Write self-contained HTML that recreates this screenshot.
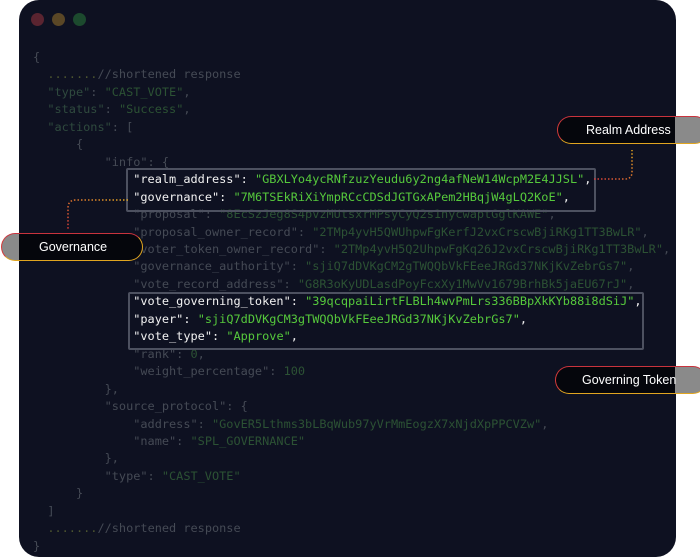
<!DOCTYPE html>
<html><head><style>
html,body{margin:0;padding:0;background:#fff;width:700px;height:557px;overflow:hidden;position:relative}
.win{position:absolute;left:19px;top:0;width:657px;height:557px;background:#0e1121;border-radius:20px}
.dot{position:absolute;top:13px;width:13px;height:13px;border-radius:50%}
pre{position:absolute;left:33px;top:49px;margin:0;font-family:"DejaVu Sans Mono","Liberation Mono",monospace;font-size:11.9px;line-height:17.45px;color:#454a55}
.k{color:#3f4a4c}.v{color:#2c5234}.d{color:#4c5530}
.b{color:#f2f2f2}.g{color:#56c93c}
.kt{color:#2f4a3e}
.box{position:absolute;border:2px solid #4d5160;border-radius:2px}
.pill{position:absolute;height:26px;border-radius:14px;border:1.5px solid #e0a520;border-left-color:#d33a3a;border-top-color:#c9333d;background:#05060c;color:#fff;font-family:"Liberation Sans",sans-serif;font-size:12.5px;line-height:26px;box-sizing:content-box}
</style></head><body>
<div class="win"></div>
<div class="dot" style="left:31px;background:#5a2430"></div>
<div class="dot" style="left:52px;background:#5a4726"></div>
<div class="dot" style="left:73px;background:#1c4a2e"></div>
<pre>{
  <span class="d">.......</span>//shortened response
  <span class="kt">"type"</span>: <span class="v">"CAST_VOTE"</span>,
  <span class="kt">"status"</span>: <span class="v">"Success"</span>,
  <span class="kt">"actions"</span>: [
      {
          "info": {
              <span class="b">"realm_address"</span><span class="b">:</span> <span class="g">"GBXLYo4ycRNfzuzYeudu6y2ng4afNeW14WcpM2E4JJSL"</span><span class="b">,</span>
              <span class="b">"governance"</span><span class="b">:</span> <span class="g">"7M6TSEkRiXiYmpRCcCDSdJGTGxAPem2HBqjW4gLQ2KoE"</span><span class="b">,</span>
              "proposal": <span class="v">"8EcSzJeg8S4pvzMUtsxrMPsyCyQ2s1nycwaptGglKAWE"</span>,
              "proposal_owner_record": <span class="v">"2TMp4yvH5QWUhpwFgKerfJ2vxCrscwBjiRKg1TT3BwLR"</span>,
              "voter_token_owner_record": <span class="v">"2TMp4yvH5Q2UhpwFgKq26J2vxCrscwBjiRKg1TT3BwLR"</span>,
              "governance_authority": <span class="v">"sjiQ7dDVKgCM2gTWQQbVkFEeeJRGd37NKjKvZebrGs7"</span>,
              "vote_record_address": <span class="v">"G8R3oKyUDLasdPoyFcxXy1MwVv1679BrhBk5jaEU67rJ"</span>,
              <span class="b">"vote_governing_token"</span><span class="b">:</span> <span class="g">"39qcqpaiLirtFLBLh4wvPmLrs336BBpXkKYb88i8dSiJ"</span><span class="b">,</span>
              <span class="b">"payer"</span><span class="b">:</span> <span class="g">"sjiQ7dDVKgCM3gTWQQbVkFEeeJRGd37NKjKvZebrGs7"</span><span class="b">,</span>
              <span class="b">"vote_type"</span><span class="b">:</span> <span class="g">"Approve"</span><span class="b">,</span>
              "rank": <span class="v">0</span>,
              "weight_percentage": <span class="v">100</span>
          },
          "source_protocol": {
              "address": <span class="v">"GovER5Lthms3bLBqWub97yVrMmEogzX7xNjdXpPPCVZw"</span>,
              "name": <span class="v">"SPL_GOVERNANCE"</span>
          },
          "type": <span class="v">"CAST_VOTE"</span>
      }
  ]
  <span class="d">.......</span>//shortened response
}</pre>
<div class="box" style="left:126px;top:168px;width:466px;height:40px"></div>
<div class="box" style="left:128px;top:292px;width:512px;height:54px"></div>
<svg width="700" height="557" style="position:absolute;left:0;top:0">
<defs><linearGradient id="gr" x1="0" y1="1" x2="1" y2="0"><stop offset="0" stop-color="#d33a3a"/><stop offset="1" stop-color="#e0a520"/></linearGradient></defs>
<path d="M128 200 H76 Q68 200 68 208 V230" fill="none" stroke="url(#gr)" stroke-width="1.5" stroke-dasharray="1.5 2"/>
<path d="M594 179 H625 Q632 179 632 172 V150" fill="none" stroke="url(#gr)" stroke-width="1.5" stroke-dasharray="1.5 2"/>
<path d="M617 313 V360" fill="none" stroke="url(#gr)" stroke-width="1.5" stroke-dasharray="1.5 2"/>
</svg>
<div class="pill" style="left:1px;top:233px;width:140px;text-indent:37px;background:linear-gradient(to right,#8a8a8a 17px,#05060c 17px)">Governance</div>
<div class="pill" style="left:557px;top:116px;width:150px;text-indent:28px;background:linear-gradient(to right,#05060c 117px,#8a8a8a 117px)">Realm Address</div>
<div class="pill" style="left:555px;top:366px;width:150px;text-indent:26px;background:linear-gradient(to right,#05060c 119px,#8a8a8a 119px)">Governing Token</div>
</body></html>
